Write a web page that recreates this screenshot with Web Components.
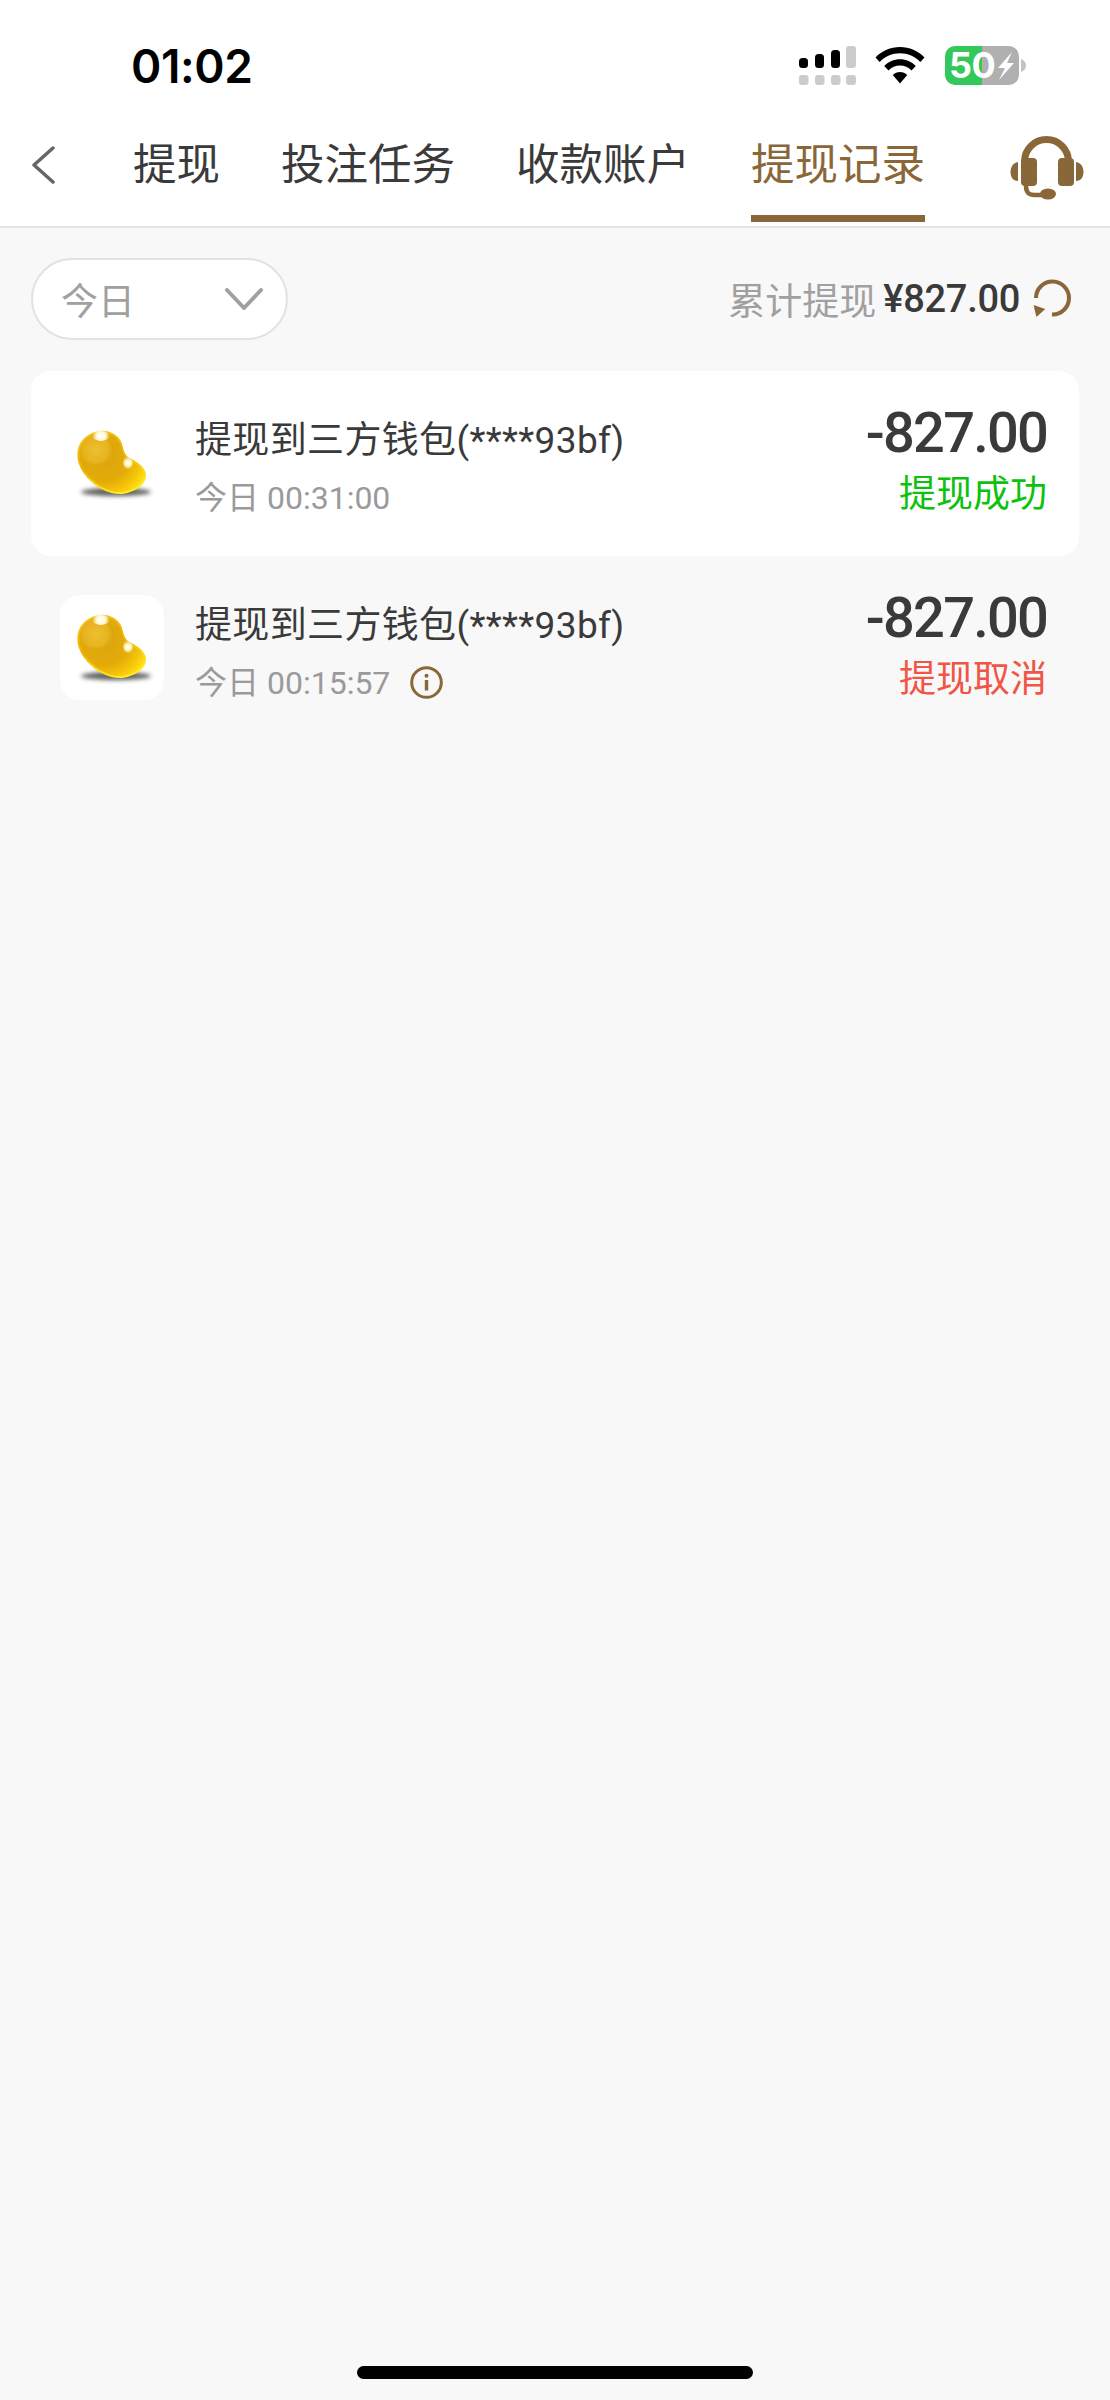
<!DOCTYPE html>
<html lang="zh-CN">
<head>
<meta charset="utf-8">
<title>提现记录</title>
<style>
  html, body { margin: 0; padding: 0; height: 100%; }
  body {
    display: flex;
    flex-direction: column;
    background: #f8f8f8;
    color: #3a3a3a;
    font-family: Roboto, "Noto Sans CJK SC", sans-serif;
  }
</style>
</head>
<body>
  <status-bar time="01:02"></status-bar>
  <tab-nav>
    <tab-item>提现</tab-item>
    <tab-item>投注任务</tab-item>
    <tab-item>收款账户</tab-item>
    <tab-item active>提现记录</tab-item>
  </tab-nav>
  <filter-bar label="今日" total="¥827.00"></filter-bar>
  <record-list>
    <record-row card state="ok">
      <span slot="title">提现到三方钱包(****93bf)</span>
      <span slot="time">今日 00:31:00</span>
      <span slot="amount">-827.00</span>
      <span slot="status">提现成功</span>
    </record-row>
    <record-row info state="cancel">
      <span slot="title">提现到三方钱包(****93bf)</span>
      <span slot="time">今日 00:15:57</span>
      <span slot="amount">-827.00</span>
      <span slot="status">提现取消</span>
    </record-row>
  </record-list>
  <home-bar></home-bar>

<script>
class StatusBar extends HTMLElement {
  constructor() {
    super();
    this.shadowDOM = this.attachShadow({mode: 'open'});
  }

  connectedCallback() {
    this.render();
  }

  render() {
    this.shadowDOM.innerHTML = `
      <style>
        :host {
          display: flex;
          align-items: flex-start;
          justify-content: space-between;
          box-sizing: border-box;
          height: 110px;
          padding: 46px 84px 0 131px;
          background: #fff;
        }
        .time {
          font: 600 46px/40px Inter, sans-serif;
          letter-spacing: -0.4px;
          color: #000;
        }
        .icons { display: flex; gap: 19px; }
        svg { display: block; }
        .battery { position: relative; }
        .battery b {
          position: absolute;
          left: 5px;
          top: 0;
          font: 700 36px/39px Inter, sans-serif;
          color: #fff;
          letter-spacing: -0.5px;
        }
      </style>
      <div class="time">${this.getAttribute('time')}</div>
      <div class="icons">
        <svg width="57" height="39" viewBox="0 0 57 39">
          <rect x="0" y="12" width="9" height="10" rx="3.5"/>
          <rect x="16" y="8" width="9" height="14" rx="3.5"/>
          <rect x="32" y="4" width="9" height="18" rx="3.5"/>
          <rect x="47" y="0" width="10" height="22" rx="3" fill="#ccc"/>
          <rect x="0" y="29" width="9.5" height="10" rx="3" fill="#ccc"/>
          <rect x="16" y="29" width="9.5" height="10" rx="3" fill="#ccc"/>
          <rect x="32" y="29" width="9.5" height="10" rx="3" fill="#ccc"/>
          <rect x="47" y="29" width="10" height="10" rx="3" fill="#ccc"/>
        </svg>
        <svg width="50" height="37" viewBox="0 0 50 37" style="margin-top:1px">
          <path d="M25 0C34.500 0 43 3.800 49.500 10.500L45.300 15C40 9.500 32.800 6.200 25 6.200S10 9.500 4.700 15L.5 10.500C7 3.800 15.500 0 25 0Z"/>
          <path d="M25 12.300C31 12.300 36.600 14.700 40.800 19L36.500 23.500C33.500 20.400 29.400 18.600 25 18.600S16.500 20.400 13.500 23.500L9.200 19C13.400 14.700 19 12.300 25 12.300Z"/>
          <path d="M25 25C27.800 25 30.300 26.100 32.200 27.900L25 36.500 17.800 27.900C19.700 26.100 22.200 25 25 25Z"/>
        </svg>
        <div class="battery">
          <svg width="81" height="39" viewBox="0 0 81 39" style="margin-left:1px">
            <path d="M10 0H37V39H10A10 10 0 0 1 0 29V10A10 10 0 0 1 10 0Z" fill="#34c759"/>
            <path d="M37 0H64A10 10 0 0 1 74 10V29A10 10 0 0 1 64 39H37Z" fill="#b0b0b0"/>
            <path d="M76 13C79 14 81 16.500 81 19.500S79 25 76 26Z" fill="#c4c4c4"/>
            <path d="M67 6L53 22H60L54 34L69 17H62Z" fill="#fff"/>
          </svg>
          <b>50</b>
        </div>
      </div>
    `;
  }
}

class TabNav extends HTMLElement {
  constructor() {
    super();
    this.shadowDOM = this.attachShadow({mode: 'open'});
  }

  connectedCallback() {
    this.render();
  }

  render() {
    this.shadowDOM.innerHTML = `
      <style>
        :host {
          display: flex;
          align-items: stretch;
          box-sizing: border-box;
          height: 118px;
          padding-bottom: 4px;
          background: #fff;
          border-bottom: 2px solid #e4e4e4;
        }
        .back { width: 133px; padding: 36px 0 0 31px; box-sizing: border-box; }
        .tabs { display: flex; gap: 61px; flex: 1; }
        .service { padding: 24px 25px 0 0; }
        svg { display: block; }
      </style>
      <div class="back">
        <svg width="24" height="38" viewBox="0 0 24 38">
          <path d="M22 2L3 19L22 36" fill="none" stroke="#666" stroke-width="3.500" stroke-linecap="round" stroke-linejoin="round"/>
        </svg>
      </div>
      <div class="tabs"><slot></slot></div>
      <div class="service">
        <svg width="76" height="66" viewBox="0 0 76 66">
          <path d="M13.500 32V27.500A22 22 0 0 1 57.500 27.500V32" transform="translate(2 0)" fill="none" stroke="#8a6738" stroke-width="7"/>
          <rect x="12" y="24" width="16" height="28" rx="4" fill="#8a6738"/>
          <rect x="49" y="24" width="16" height="28" rx="4" fill="#8a6738"/>
          <path d="M9 28V47C4 47 1.500 43 1.500 38S4 29 9 28Z" fill="#8a6738"/>
          <path d="M67 28V47C72 47 74.500 43 74.500 38S72 29 67 28Z" fill="#8a6738"/>
          <path d="M17 52C17 59 20 61 26 61H34" fill="none" stroke="#8a6738" stroke-width="4.500" stroke-linecap="round"/>
          <ellipse cx="39" cy="60" rx="8" ry="5.500" fill="#8a6738"/>
        </svg>
      </div>
    `;
  }
}

class TabItem extends HTMLElement {
  constructor() {
    super();
    this.shadowDOM = this.attachShadow({mode: 'open'});
  }

  connectedCallback() {
    this.render();
  }

  render() {
    const active = this.hasAttribute('active');
    this.shadowDOM.innerHTML = `
      <style>
        :host {
          display: block;
          box-sizing: border-box;
          padding-top: 31px;
          font-size: 43.500px;
          line-height: 50px;
          white-space: nowrap;
          color: ${active ? '#8a6738' : '#3a3a3a'};
          ${active ? 'border-bottom: 7px solid #8a6738;' : ''}
        }
      </style>
      <slot></slot>
    `;
  }
}

class FilterBar extends HTMLElement {
  constructor() {
    super();
    this.shadowDOM = this.attachShadow({mode: 'open'});
  }

  connectedCallback() {
    this.render();
  }

  render() {
    this.shadowDOM.innerHTML = `
      <style>
        :host {
          display: flex;
          align-items: center;
          justify-content: space-between;
          box-sizing: border-box;
          height: 143px;
          padding: 0 37px 1px 31px;
        }
        .pill {
          display: flex;
          align-items: center;
          justify-content: space-between;
          box-sizing: border-box;
          width: 257px;
          height: 82px;
          padding: 0 23px 0 28px;
          background: #fff;
          border: 2px solid #e2e2e2;
          border-radius: 41px;
          font-size: 37px;
          color: #a0a0a0;
        }
        .total { display: flex; align-items: center; font-size: 37px; color: #a0a0a0; }
        .total b { font-weight: 500; font-size: 38px; letter-spacing: -0.3px; color: #3a3a3a; margin: 0 13px 0 7px; }
        svg { display: block; }
      </style>
      <div class="pill">
        <span>${this.getAttribute('label')}</span>
        <svg width="38" height="24" viewBox="0 0 38 24">
          <path d="M2 3L19 21L36 3" fill="none" stroke="#a0a0a0" stroke-width="4" stroke-linecap="round" stroke-linejoin="round"/>
        </svg>
      </div>
      <div class="total">
        <span>累计提现</span><b>${this.getAttribute('total')}</b>
        <svg width="40" height="40" viewBox="0 0 40 40">
          <path d="M3 19A16.500 16.500 0 1 1 19 35.500" fill="none" stroke="#8a6738" stroke-width="4"/>
          <path d="M.6 26L12.300 30L3.400 38Z" fill="#8a6738"/>
        </svg>
      </div>
    `;
  }
}

class RecordList extends HTMLElement {
  constructor() {
    super();
    this.shadowDOM = this.attachShadow({mode: 'open'});
  }

  connectedCallback() {
    this.shadowDOM.innerHTML = `
      <style>
        :host { display: block; flex: 1; padding: 0 31px; }
      </style>
      <slot></slot>
    `;
  }
}

class BeanIcon extends HTMLElement {
  constructor() {
    super();
    this.shadowDOM = this.attachShadow({mode: 'open'});
  }

  connectedCallback() {
    this.render();
  }

  render() {
    const shape = 'M40 21C50 20 58 25 61 33C63 41 64 45 69 48C75 51 83 55 85 63C86 71 77 80 62 82C50 83 37 76 28 66C20 57 17 47 19 38C21 29 30 22 40 21Z';
    this.shadowDOM.innerHTML = `
      <style>
        :host {
          display: block;
          width: 104px;
          height: 105px;
          background: #fff;
          border-radius: 20px;
        }
        svg { display: block; }
      </style>
      <svg width="104" height="105" viewBox="0 0 104 105">
        <defs>
          <radialGradient id="body" gradientUnits="userSpaceOnUse" cx="42" cy="42" r="52">
            <stop offset="0" stop-color="#d8a410"/>
            <stop offset="0.55" stop-color="#e4ab08"/>
            <stop offset="0.8" stop-color="#f7c80a"/>
            <stop offset="1" stop-color="#ffe818"/>
          </radialGradient>
          <radialGradient id="lobe" gradientUnits="userSpaceOnUse" cx="36" cy="39" r="17">
            <stop offset="0" stop-color="#edbf30"/>
            <stop offset="0.7" stop-color="#e8b420"/>
            <stop offset="1" stop-color="#e8b420" stop-opacity="0"/>
          </radialGradient>
          <radialGradient id="glow" gradientUnits="userSpaceOnUse" cx="41" cy="25" r="9">
            <stop offset="0" stop-color="#fff"/>
            <stop offset="0.5" stop-color="#fff8d6"/>
            <stop offset="1" stop-color="#fff8d6" stop-opacity="0"/>
          </radialGradient>
          <radialGradient id="glow2" gradientUnits="userSpaceOnUse" cx="68" cy="52" r="6.500">
            <stop offset="0" stop-color="#fff"/>
            <stop offset="0.45" stop-color="#fff6c8"/>
            <stop offset="1" stop-color="#fff6c8" stop-opacity="0"/>
          </radialGradient>
          <linearGradient id="edge" x1="0.1" y1="0" x2="0.5" y2="1">
            <stop offset="0" stop-color="#f5c21a"/>
            <stop offset="0.5" stop-color="#f0b400"/>
            <stop offset="1" stop-color="#ffea20"/>
          </linearGradient>
          <filter id="blur" x="-20%" y="-100%" width="140%" height="300%">
            <feGaussianBlur stdDeviation="2.200"/>
          </filter>
        </defs>
        <ellipse cx="56" cy="81" rx="35" ry="4" fill="#2c2a26" opacity="0.75" filter="url(#blur)"/>
        <path d="${shape}" fill="url(#body)"/>
        <path d="${shape}" fill="none" stroke="url(#edge)" stroke-width="2"/>
        <ellipse cx="36" cy="39" rx="16" ry="15" fill="url(#lobe)"/>
        <ellipse cx="41" cy="25" rx="9" ry="5" fill="url(#glow)"/>
        <ellipse cx="68" cy="52" rx="5" ry="6.500" fill="url(#glow2)"/>
      </svg>
    `;
  }
}

class RecordRow extends HTMLElement {
  constructor() {
    super();
    this.shadowDOM = this.attachShadow({mode: 'open'});
  }

  connectedCallback() {
    this.render();
  }

  render() {
    const statusColor = this.getAttribute('state') === 'ok' ? '#0cc20c' : '#f05545';
    const info = this.hasAttribute('info') ? `
      <svg width="33" height="33" viewBox="0 0 33 33">
        <circle cx="16.500" cy="16.500" r="14.800" fill="none" stroke="#8a6738" stroke-width="3"/>
        <circle cx="16.500" cy="9.800" r="2" fill="#8a6738"/>
        <rect x="14.800" y="14" width="3.400" height="10.500" fill="#8a6738"/>
      </svg>` : '';
    this.shadowDOM.innerHTML = `
      <style>
        :host {
          display: flex;
          align-items: center;
          box-sizing: border-box;
          height: 184.500px;
          padding: 0 32px 0 29px;
          border-radius: 20px;
          background: ${this.hasAttribute('card') ? '#fff' : 'transparent'};
        }
        bean-icon { flex: none; margin-right: 31px; }
        .main { flex: 1; display: flex; flex-direction: column; gap: 12px; margin-top: 8px; }
        .title { font-size: 37px; line-height: 50px; letter-spacing: 0.35px; color: #3a3a3a; white-space: nowrap; }
        .time { display: flex; align-items: center; gap: 20px; font-size: 32px; line-height: 40px; color: #9a9a9a; white-space: nowrap; }
        .side { display: flex; flex-direction: column; align-items: flex-end; margin-top: -3px; }
        .amount { font-size: 56px; line-height: 60px; font-weight: 500; letter-spacing: -1.8px; color: #3a3a3a; }
        .status { font-size: 37px; line-height: 50px; margin-top: 7px; color: ${statusColor}; }
        svg { display: block; }
      </style>
      <bean-icon></bean-icon>
      <div class="main">
        <div class="title"><slot name="title"></slot></div>
        <div class="time"><span><slot name="time"></slot></span>${info}</div>
      </div>
      <div class="side">
        <div class="amount"><slot name="amount"></slot></div>
        <div class="status"><slot name="status"></slot></div>
      </div>
    `;
  }
}

class HomeBar extends HTMLElement {
  constructor() {
    super();
    this.shadowDOM = this.attachShadow({mode: 'open'});
  }

  connectedCallback() {
    this.shadowDOM.innerHTML = `
      <style>
        :host { display: flex; justify-content: center; padding-bottom: 21px; }
        div { width: 396px; height: 13px; border-radius: 7px; background: #000; }
      </style>
      <div></div>
    `;
  }
}

customElements.define('bean-icon', BeanIcon);
customElements.define('status-bar', StatusBar);
customElements.define('tab-nav', TabNav);
customElements.define('tab-item', TabItem);
customElements.define('filter-bar', FilterBar);
customElements.define('record-list', RecordList);
customElements.define('record-row', RecordRow);
customElements.define('home-bar', HomeBar);
</script>
</body>
</html>
